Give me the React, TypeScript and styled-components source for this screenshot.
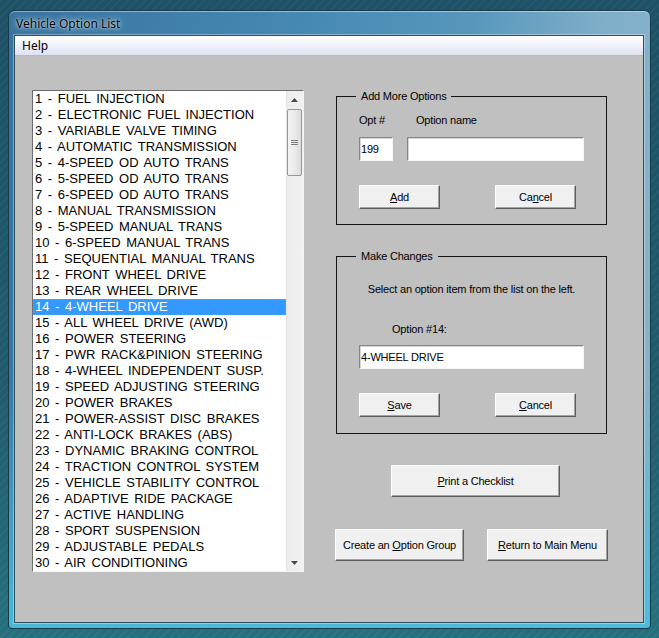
import styled, { createGlobalStyle } from "styled-components";

const GlobalStyle = createGlobalStyle`
    html, body {
        margin: 0;
        padding: 0;
    }
    body {
        width: 659px;
        height: 638px;
        overflow: hidden;
        background:
            repeating-linear-gradient(135deg, rgba(255,255,255,0.035) 0 2px, transparent 2px 6px),
            linear-gradient(180deg, #1c5166 0%, #205b6c 60%, #25707e 100%);
        font-family: "Liberation Sans", Arial, sans-serif;
    }
`;

const Window = styled.div`
    box-sizing: border-box;
    margin: 10px 0 0 8px;
    width: 643px;
    height: 619px;
    padding: 0 6px 5px 5px;
    display: flex;
    flex-direction: column;
    border: 1px solid #173846;
    border-radius: 7px 7px 4px 4px;
    background:
        linear-gradient(180deg, rgba(80,190,222,0) 0%, rgba(80,190,222,0) 60%, rgba(74,188,220,0.95) 100%),
        linear-gradient(100deg, #3774a0 0%, #4689b2 40%, #5797bc 62%, #80afc9 80%, #8ab4ca 100%);
    box-shadow: inset 0 1px 0 rgba(255,255,255,0.45);
`;

const TitleBar = styled.div`
    height: 24px;
    display: flex;
    align-items: center;
    padding-left: 2px;
    font-family: "Noto Sans", "Open Sans", sans-serif;
    font-size: 12px;
    color: #000;
    text-shadow: 0 0 6px rgba(255,255,255,0.9), 0 0 2px rgba(255,255,255,0.8);
`;

const Client = styled.div`
    flex: 1;
    display: flex;
    flex-direction: column;
    border: 1px solid #2e4f5e;
    box-shadow: 0 0 0 1px rgba(255,255,255,0.35);
`;

const MenuBar = styled.div`
    height: 19px;
    display: flex;
    align-items: center;
    padding-left: 7px;
    border-bottom: 1px solid #b4b9c8;
    background: linear-gradient(180deg, #ffffff 0%, #f3f5fb 40%, #dde2f1 100%);
    font-family: "Noto Sans", "Open Sans", sans-serif;
    font-size: 12px;
    color: #000;
`;

const Content = styled.div`
    flex: 1;
    display: flex;
    align-items: flex-start;
    gap: 31px;
    padding: 34px 0 0 17px;
    background: #c0c0c0;
`;

const ListBox = styled.div`
    box-sizing: border-box;
    width: 272px;
    height: 482px;
    display: flex;
    border: 1px solid;
    border-color: #6e6e6e #f4f4f4 #f4f4f4 #6e6e6e;
    background: #fff;
`;

const Items = styled.div`
    flex: 1;
    display: flex;
    flex-direction: column;
    overflow: hidden;
`;

const Item = styled.div<{ $selected?: boolean }>`
    height: 16px;
    line-height: 16px;
    padding-left: 2px;
    font-size: 13px;
    word-spacing: 2px;
    white-space: pre;
    color: ${(p) => (p.$selected ? "#fff" : "#000")};
    background: ${(p) => (p.$selected ? "#3399ff" : "transparent")};
    outline: ${(p) => (p.$selected ? "1px dotted #e8821e" : "none")};
    outline-offset: -1px;
`;

const ScrollBar = styled.div`
    width: 17px;
    display: flex;
    flex-direction: column;
    background: linear-gradient(90deg, #e2e2e2 0, #ededed 2px, #f1f1f1 100%);
`;

const ArrowButton = styled.div`
    height: 17px;
    display: flex;
    align-items: center;
    justify-content: center;
`;

const Track = styled.div`
    flex: 1;
    padding: 1px 1px 0 1px;
`;

const Thumb = styled.div`
    box-sizing: border-box;
    height: 67px;
    border: 1px solid #979797;
    border-radius: 2px;
    background: linear-gradient(90deg, #f4f4f4 0%, #ebebeb 50%, #dcdcdc 100%);
    display: flex;
    align-items: center;
    justify-content: center;
`;

const Column = styled.div`
    width: 273px;
    display: flex;
    flex-direction: column;
    font-size: 11px;
    letter-spacing: -0.2px;
    color: #000;
`;

const Group = styled.fieldset<{ $top?: number }>`
    margin: ${(p) => p.$top ?? 0}px 0 0 1px;
    width: 271px;
    box-sizing: border-box;
    padding: 0 0 0 22px;
    border: 1px solid #141414;
    min-width: 0;
`;

const Legend = styled.legend`
    margin-left: -3px;
    padding: 0 5px;
    line-height: 13px;
`;

const Row = styled.div<{ $top: number; $gap?: number }>`
    display: flex;
    align-items: center;
    margin-top: ${(p) => p.$top}px;
    gap: ${(p) => p.$gap ?? 0}px;
`;

const Label = styled.span<{ $width?: number; $indent?: number }>`
    display: inline-block;
    width: ${(p) => (p.$width ? `${p.$width}px` : "auto")};
    margin-left: ${(p) => p.$indent ?? 0}px;
    line-height: 13px;
`;

const Note = styled.div`
    margin: 20px 0 0 -22px;
    line-height: 13px;
    text-align: center;
`;

const TextBox = styled.input<{ $width: number }>`
    box-sizing: border-box;
    width: ${(p) => p.$width}px;
    height: 24px;
    padding: 0 1px;
    margin: 0;
    border: 1px solid;
    border-color: #858585 #f6f6f6 #f6f6f6 #858585;
    box-shadow: inset 1px 1px 0 #d6d6d6;
    background: #fff;
    font-family: "Liberation Sans", Arial, sans-serif;
    font-size: 11px;
    letter-spacing: -0.2px;
    color: #000;
    outline: none;
`;

const Button = styled.button<{ $width: number; $height?: number; $indent?: number }>`
    box-sizing: border-box;
    width: ${(p) => p.$width}px;
    height: ${(p) => p.$height ?? 24}px;
    margin: 0 0 0 ${(p) => p.$indent ?? 0}px;
    padding: 0;
    border: 1px solid;
    border-color: #ffffff #5c5c5c #5c5c5c #ffffff;
    box-shadow: inset -1px -1px 0 #a3a3a3;
    background: #f0f0f0;
    font-family: "Liberation Sans", Arial, sans-serif;
    font-size: 11px;
    letter-spacing: -0.2px;
    color: #000;
    u {
        text-underline-offset: 1px;
    }
`;

const ButtonRow = styled.div<{ $top: number; $gap: number }>`
    display: flex;
    margin-top: ${(p) => p.$top}px;
    gap: ${(p) => p.$gap}px;
`;

const GroupBody = styled.div<{ $bottom: number }>`
    padding-bottom: ${(p) => p.$bottom}px;
`;

const options = [
    "FUEL INJECTION",
    "ELECTRONIC FUEL INJECTION",
    "VARIABLE VALVE TIMING",
    "AUTOMATIC TRANSMISSION",
    "4-SPEED OD AUTO TRANS",
    "5-SPEED OD AUTO TRANS",
    "6-SPEED OD AUTO TRANS",
    "MANUAL TRANSMISSION",
    "5-SPEED MANUAL TRANS",
    "6-SPEED MANUAL TRANS",
    "SEQUENTIAL MANUAL TRANS",
    "FRONT WHEEL DRIVE",
    "REAR WHEEL DRIVE",
    "4-WHEEL DRIVE",
    "ALL WHEEL DRIVE (AWD)",
    "POWER STEERING",
    "PWR RACK&PINION STEERING",
    "4-WHEEL INDEPENDENT SUSP.",
    "SPEED ADJUSTING STEERING",
    "POWER BRAKES",
    "POWER-ASSIST DISC BRAKES",
    "ANTI-LOCK BRAKES (ABS)",
    "DYNAMIC BRAKING CONTROL",
    "TRACTION CONTROL SYSTEM",
    "VEHICLE STABILITY CONTROL",
    "ADAPTIVE RIDE PACKAGE",
    "ACTIVE HANDLING",
    "SPORT SUSPENSION",
    "ADJUSTABLE PEDALS",
    "AIR CONDITIONING",
];

function Arrow({ down }: { down?: boolean }) {
    return (
        <svg width="7" height="4" viewBox="0 0 7 4">
            <path d={down ? "M0 0H7L3.5 4Z" : "M3.5 0L7 4H0Z"} fill="#4a4a4a" />
        </svg>
    );
}

export default function App() {
    const selected = 14;

    return (
        <>
            <GlobalStyle />
            <Window>
                <TitleBar>Vehicle Option List</TitleBar>
                <Client>
                    <MenuBar>Help</MenuBar>
                    <Content>
                        <ListBox>
                            <Items>
                                {options.map((name, i) => (
                                    <Item key={name} $selected={i + 1 === selected}>
                                        {`${i + 1} - ${name}`}
                                    </Item>
                                ))}
                            </Items>
                            <ScrollBar>
                                <ArrowButton><Arrow /></ArrowButton>
                                <Track>
                                    <Thumb>
                                        <svg width="7" height="6" viewBox="0 0 7 6">
                                            <path d="M0 0.5H7M0 2.5H7M0 4.5H7" stroke="#7a7a7a" strokeWidth="1" />
                                        </svg>
                                    </Thumb>
                                </Track>
                                <ArrowButton><Arrow down /></ArrowButton>
                            </ScrollBar>
                        </ListBox>

                        <Column>
                            <Group>
                                <Legend>Add More Options</Legend>
                                <GroupBody $bottom={15}>
                                    <Row $top={11}>
                                        <Label $width={57}>Opt #</Label>
                                        <Label>Option name</Label>
                                    </Row>
                                    <Row $top={10} $gap={14}>
                                        <TextBox $width={34} defaultValue="199" />
                                        <TextBox $width={177} defaultValue="" />
                                    </Row>
                                    <ButtonRow $top={24} $gap={55}>
                                        <Button $width={81}><u>A</u>dd</Button>
                                        <Button $width={81}>Ca<u>n</u>cel</Button>
                                    </ButtonRow>
                                </GroupBody>
                            </Group>

                            <Group $top={25}>
                                <Legend>Make Changes</Legend>
                                <GroupBody $bottom={16}>
                                    <Note>Select an option item from the list on the left.</Note>
                                    <Row $top={27}>
                                        <Label $indent={33}>Option #{selected}:</Label>
                                    </Row>
                                    <Row $top={9}>
                                        <TextBox $width={225} defaultValue={options[selected - 1]} />
                                    </Row>
                                    <ButtonRow $top={24} $gap={55}>
                                        <Button $width={81}><u>S</u>ave</Button>
                                        <Button $width={81}><u>C</u>ancel</Button>
                                    </ButtonRow>
                                </GroupBody>
                            </Group>

                            <ButtonRow $top={31} $gap={0}>
                                <Button $width={169} $height={32} $indent={56}><u>P</u>rint a Checklist</Button>
                            </ButtonRow>
                            <ButtonRow $top={32} $gap={23}>
                                <Button $width={129} $height={32}>Create an <u>O</u>ption Group</Button>
                                <Button $width={121} $height={32}><u>R</u>eturn to Main Menu</Button>
                            </ButtonRow>
                        </Column>
                    </Content>
                </Client>
            </Window>
        </>
    );
}
